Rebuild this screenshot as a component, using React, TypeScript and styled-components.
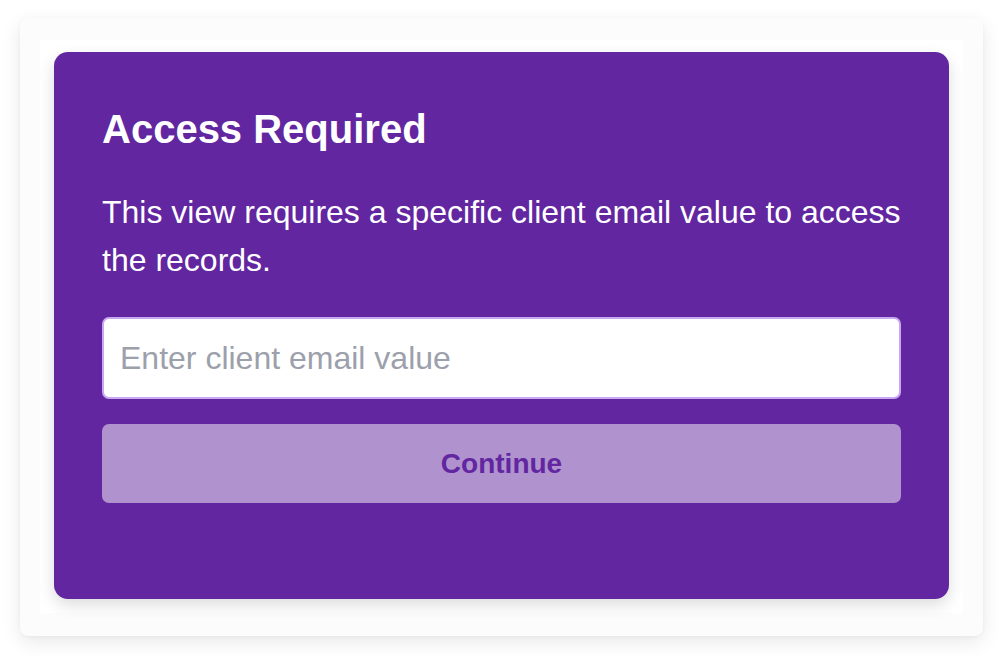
import styled, { createGlobalStyle } from "styled-components";

const GlobalStyle = createGlobalStyle`
  html, body {
    margin: 0;
    padding: 0;
    background: #ffffff;
    font-family: "Liberation Sans", Arial, Helvetica, sans-serif;
  }
  * {
    box-sizing: border-box;
  }
`;

const Page = styled.div`
  padding: 18px 21px 20px 20px;
`;

const Frame = styled.div`
  background-color: #fcfcfc;
  border-radius: 8px;
  padding: 22px 20px 23px 20px;
  box-shadow: 0 6px 20px rgba(0, 0, 0, 0.09), 0 1px 4px rgba(0, 0, 0, 0.04);
`;

const Surface = styled.div`
  background-color: #ffffff;
  padding: 12px 14px 14px 14px;
`;

const AccessCard = styled.section`
  display: flex;
  flex-direction: column;
  background-color: #6126a0;
  border-radius: 14px;
  padding: 54px 48px 96px;
  box-shadow: 0 6px 16px rgba(0, 0, 0, 0.14);
  color: #ffffff;
`;

const Title = styled.h2`
  margin: 0 0 36px;
  font-size: 40px;
  font-weight: 700;
  line-height: 46px;
`;

const Message = styled.p`
  margin: 0 0 33px;
  font-size: 32px;
  line-height: 48px;
`;

const EmailInput = styled.input`
  height: 82px;
  width: 100%;
  padding: 0 16px;
  border: 2px solid #c9a8f2;
  border-radius: 7px;
  background-color: #ffffff;
  color: #1f2937;
  font-family: inherit;
  font-size: 32px;
  outline: none;

  &::placeholder {
    color: #9ca0ab;
  }
`;

const SubmitButton = styled.button<{ $disabled?: boolean }>`
  margin-top: 25px;
  height: 79px;
  width: 100%;
  border: none;
  border-radius: 7px;
  background-color: ${(p) => (p.$disabled ? "#b093ce" : "#ffffff")};
  color: #6126a0;
  font-family: inherit;
  font-size: 28px;
  font-weight: 700;
  cursor: ${(p) => (p.$disabled ? "not-allowed" : "pointer")};
`;

export default function App() {
  return (
    <>
      <GlobalStyle />
      <Page>
        <Frame>
          <Surface>
            <AccessCard>
              <Title>Access Required</Title>
              <Message>
                This view requires a specific client email value to access the
                records.
              </Message>
              <EmailInput type="email" placeholder="Enter client email value" />
              <SubmitButton $disabled>Continue</SubmitButton>
            </AccessCard>
          </Surface>
        </Frame>
      </Page>
    </>
  );
}
